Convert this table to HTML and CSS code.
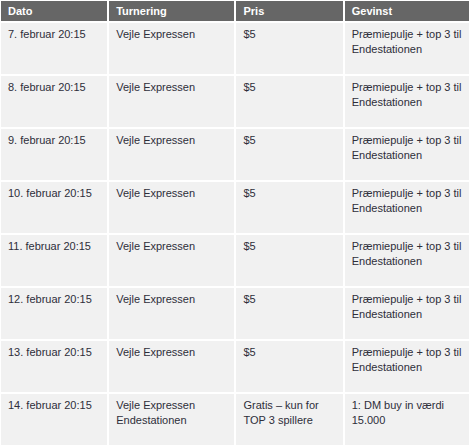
FILE: index.html
```html
<!DOCTYPE html>
<html lang="da">
<head>
<meta charset="utf-8">
<title>Turneringer</title>
<link rel="stylesheet" href="styles.css">
</head>
<body>
<table class="schedule">
  <thead>
    <tr>
      <th class="c-date">Dato</th>
      <th class="c-tour">Turnering</th>
      <th class="c-price">Pris</th>
      <th class="c-prize">Gevinst</th>
    </tr>
  </thead>
  <tbody>
    <tr><td>7. februar 20:15</td><td>Vejle Expressen</td><td>$5</td><td>Præmiepulje + top 3 til Endestationen</td></tr>
    <tr><td>8. februar 20:15</td><td>Vejle Expressen</td><td>$5</td><td>Præmiepulje + top 3 til Endestationen</td></tr>
    <tr><td>9. februar 20:15</td><td>Vejle Expressen</td><td>$5</td><td>Præmiepulje + top 3 til Endestationen</td></tr>
    <tr><td>10. februar 20:15</td><td>Vejle Expressen</td><td>$5</td><td>Præmiepulje + top 3 til Endestationen</td></tr>
    <tr><td>11. februar 20:15</td><td>Vejle Expressen</td><td>$5</td><td>Præmiepulje + top 3 til Endestationen</td></tr>
    <tr><td>12. februar 20:15</td><td>Vejle Expressen</td><td>$5</td><td>Præmiepulje + top 3 til Endestationen</td></tr>
    <tr><td>13. februar 20:15</td><td>Vejle Expressen</td><td>$5</td><td>Præmiepulje + top 3 til Endestationen</td></tr>
    <tr><td>14. februar 20:15</td><td>Vejle Expressen Endestationen</td><td>Gratis – kun for TOP 3 spillere</td><td>1: DM buy in værdi 15.000</td></tr>
  </tbody>
</table>
</body>
</html>
```
FILE: styles.css
```css
html, body {
  margin: 0;
  padding: 0;
  background: #ffffff;
}

.schedule {
  border-collapse: separate;
  border-spacing: 2px;
  margin: -1px 0 0 -1px;
  table-layout: fixed;
  width: 472px;
  font-family: "Liberation Sans", Arial, sans-serif;
  font-size: 11px;
}

.c-date { width: 106px; }
.c-tour { width: 125px; }
.c-price { width: 106px; }
.c-prize { width: 124px; }

.schedule th {
  background: #666666;
  color: #ffffff;
  font-weight: bold;
  text-align: left;
  height: 20px;
  padding: 0 7px;
  box-sizing: border-box;
  line-height: 20px;
  vertical-align: middle;
}

.schedule td {
  background: #f1f1f1;
  color: #2e2e3a;
  height: 51px;
  box-sizing: border-box;
  padding: 4px 7px 0 7px;
  line-height: 15px;
  vertical-align: top;
}
```
